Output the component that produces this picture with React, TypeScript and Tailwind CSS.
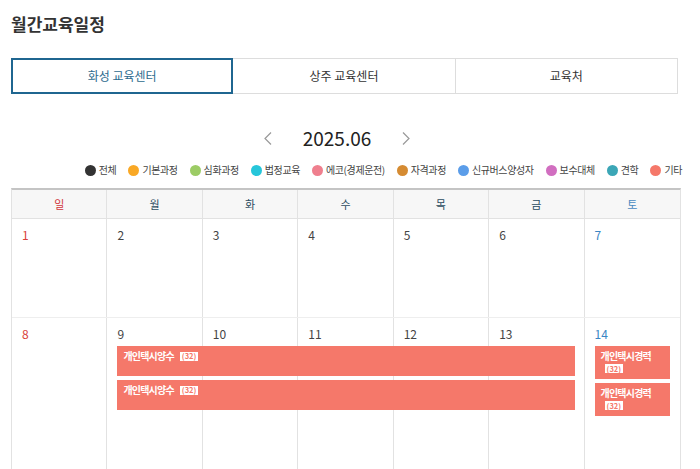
const legend = [
  { label: '전체', color: 'bg-[#333333]' },
  { label: '기본과정', color: 'bg-[#f9a825]' },
  { label: '심화과정', color: 'bg-[#9ccc65]' },
  { label: '법정교육', color: 'bg-[#26c6da]' },
  { label: '에코(경제운전)', color: 'bg-[#ef7f8e]' },
  { label: '자격과정', color: 'bg-[#d58b32]' },
  { label: '신규버스양성자', color: 'bg-[#5b9de9]' },
  { label: '보수대체', color: 'bg-[#d16ec0]' },
  { label: '견학', color: 'bg-[#3ba6b6]' },
  { label: '기타', color: 'bg-[#f5786a]' },
]

const dayNames = ['일', '월', '화', '수', '목', '금', '토']
const colStart = ['col-start-1', 'col-start-2', 'col-start-3', 'col-start-4', 'col-start-5', 'col-start-6', 'col-start-7']

function dayColor(i: number) {
  if (i === 0) return 'text-[#d9413a]'
  if (i === 6) return 'text-[#3a86c4]'
  return 'text-[#444]'
}

function Chevron({ dir }: { dir: 'left' | 'right' }) {
  return (
    <svg width="8" height="13" viewBox="0 0 8 13" fill="none" stroke="#999" strokeWidth="1.2">
      {dir === 'left' ? <polyline points="7,0.5 1,6.5 7,12.5" /> : <polyline points="1,0.5 7,6.5 1,12.5" />}
    </svg>
  )
}

function Badge() {
  return (
    <span className="inline-flex items-center h-[9px] bg-white text-[#f5786a] text-[7.5px] font-bold leading-none px-[2px]">(32)</span>
  )
}

function Week({ start, children, tall }: { start: number; children?: React.ReactNode; tall?: boolean }) {
  return (
    <div className={`grid grid-cols-7 grid-rows-[28px_1fr] border-b border-[#eeeeee] ${tall ? 'min-h-[160px]' : 'h-[99px]'}`}>
      {dayNames.map((_, i) => (
        <div
          key={i}
          className={`${colStart[i]} row-start-1 row-span-2 px-[10px] pt-[8px] text-[12px] leading-[16px] ${dayColor(i)} ${i < 6 ? 'border-r border-[#e2e2e2]' : ''}`}
        >
          {start + i}
        </div>
      ))}
      {children}
    </div>
  )
}

export default function App() {
  return (
    <div className="w-[700px] min-h-[469px] bg-white text-[#333] font-['Noto_Sans_CJK_KR','Noto_Sans',sans-serif]">
      <div className="w-[670px] ml-[11px] pt-[11px]">
        <h1 className="text-[17px] font-bold leading-[26px] text-[#333]">월간교육일정</h1>

        {/* tabs */}
        <div className="mt-[21px] grid grid-cols-3 h-[36px] mr-[3px]">
          <button className="border-2 border-[#1f6690] text-[12px] text-[#2d6b8e]">화성 교육센터</button>
          <button className="border border-l-0 border-[#dddddd] text-[12px] text-[#333]">상주 교육센터</button>
          <button className="border border-l-0 border-[#dddddd] text-[12px] text-[#333]">교육처</button>
        </div>

        {/* month nav */}
        <div className="mt-[30px] pr-[18px] flex items-center justify-center gap-[31px] h-[28px]">
          <Chevron dir="left" />
          <span className="text-[19px] leading-[28px] text-[#222]">2025.06</span>
          <Chevron dir="right" />
        </div>

        {/* legend */}
        <div className="mt-[10px] flex justify-end items-center gap-[12px] h-[16px] -mr-[1px]">
          {legend.map(l => (
            <span key={l.label} className="flex items-center gap-[3px] text-[10px] tracking-[-0.4px] text-[#444] leading-none whitespace-nowrap">
              <span className={`w-[11px] h-[11px] rounded-full ${l.color}`} />
              {l.label}
            </span>
          ))}
        </div>

        {/* calendar */}
        <div className="mt-[10px] border-t-2 border-[#c4c4c4] border-x border-x-[#e2e2e2]">
          <div className="grid grid-cols-7 h-[29px] bg-[#f7f7f7] border-b border-[#e2e2e2]">
            {dayNames.map((d, i) => (
              <div
                key={d}
                className={`flex items-center justify-center text-[11px] ${i < 6 ? 'border-r border-[#e2e2e2]' : ''} ${i === 0 ? 'text-[#d0343a]' : i === 6 ? 'text-[#4a8ac0]' : 'text-[#2b4b5f]'}`}
              >
                {d}
              </div>
            ))}
          </div>

          <Week start={1} />

          <Week start={8} tall>
            <div className="col-start-2 col-span-5 row-start-2 px-[10px] flex flex-col gap-[4px]">
              {[0, 1].map(k => (
                <div key={k} className="h-[30px] bg-[#f5786a] px-[6px] pt-[3px]">
                  <div className="flex items-center gap-[6px] h-[14px]">
                    <span className="text-white text-[10px] tracking-[-0.8px] font-bold leading-[14px]">개인택시양수</span>
                    <Badge />
                  </div>
                </div>
              ))}
            </div>
            <div className="col-start-7 row-start-2 px-[10px] flex flex-col gap-[4px]">
              {[0, 1].map(k => (
                <div key={k} className="h-[33px] bg-[#f5786a] px-[6px] pt-[3px]">
                  <div className="text-white text-[10px] tracking-[-0.8px] font-bold leading-[14px]">개인택시경력</div>
                  <div className="pl-[4px] mt-[1px] flex"><Badge /></div>
                </div>
              ))}
            </div>
          </Week>
        </div>
      </div>
    </div>
  )
}
